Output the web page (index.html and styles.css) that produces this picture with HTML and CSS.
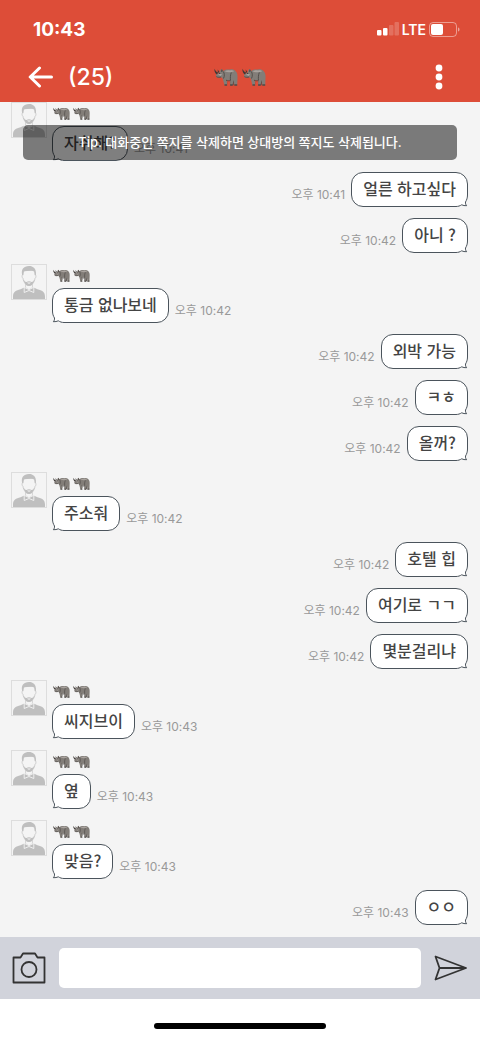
FILE: index.html
```html
<!DOCTYPE html>
<html lang="ko">
<head>
<meta charset="utf-8">
<meta name="viewport" content="width=device-width, initial-scale=1">
<title>쪽지</title>
<link rel="stylesheet" href="styles.css">
</head>
<body>
<svg class="sprite" aria-hidden="true">
  <symbol id="rhino" viewBox="0 0 24 18">
    <path fill="#4f4a47" d="M16 9h4.500l-1 8.200h-3zM9 9h3.500l.8 6.500h-2.600z"/>
    <path fill="#827d78" d="M5.500 4.400 6.800 1.600 8 1l1 1.900C12 .9 14 1.400 16 1.600c2-.6 4 0 5.300 1.200 2 1.800 2.500 4.500 2.200 7.700l-.3 7H20.400l-.8-5.500-1.200 5.500h-2.300l.2-5.600c-1.300.5-2.400.4-3.400.1l.2 5.500h-2.600L9 11.600C8.600 10.300 8 9.600 7.100 9.300 5 9.800 3.200 9.600 2.200 8.700c-.6-.9-.2-2 .6-2.800z"/>
    <path fill="#a9a39e" d="M10.500 3.200c2-1.200 4-1 5.500-.8 1.800-.5 3.200-.2 4.200.8-2.800 1.500-6.700 1.600-9.700 0zM4 6.500l2.500-1 1.500 1-1.500 1.500z"/>
    <path fill="#3f3a37" d="M2.900 6.500C1 5.300.1 3.300.5.800c.8 1.800 2 3.200 3.600 4zM3.900 4.800 3.700 1.400l1.800 2.800zM7 3.800l.9-2.700.9 2.200z"/>
    <path fill="none" stroke="#4d4845" stroke-width=".9" d="M9.300 3.500c1.300 2 1.300 4.500.2 7M17.300 4.500c-1 2.400-1 5.200-.9 7.600M12 12.200c2 .9 3.500.6 4.500.2M2.400 8.600c1.600 1 3.200.7 4.700.4"/>
    <circle cx="5.800" cy="5.500" r=".6" fill="#1f1c1a"/>
    <path fill="#35312f" d="M10.500 16.500h2.600v1h-2.600zM16.100 16.500h2.500v1h-2.500zM20.300 16.500h2.900v1h-2.900z"/>
  </symbol>
  <symbol id="person" viewBox="0 0 34 34">
    <path fill="#bfbfbf" d="M1 34v-2.500C1 27 4 25.300 8.500 24.300l5-2.300 3.500 3 3.500-3 5 2.300C30 25.300 33 27 33 31.500V34z"/>
    <path fill="#f4f4f4" stroke="#c9c9c9" stroke-width=".7" d="M13.500 18h7v4.500L17 25l-3.500-2.500z"/>
    <path fill="#f4f4f4" stroke="#c4c4c4" stroke-width=".8" d="M10.700 8c0-4 12.600-4 12.600 0v2c1 0 .8 3-.3 3.200-.4 4-3 7.300-6 7.300s-5.600-3.300-6-7.300c-1.100-.2-1.300-3.200-.3-3.200z"/>
    <path fill="#bfbfbf" d="M10.200 10C8.800 4.500 11.500 1 17 1c4 0 7.700 2.500 6.800 9l-1 .3-.6-4c-3.200-1-7-.3-10.300 0l-.6 4zM11.500 14c.9 2.300 2 3.300 3 3 1.200-1 3.800-1 5 0 1 .3 2.100-.7 3-3-.6 4.200-2.700 7-5.500 7s-4.900-2.800-5.500-7z"/>
    <path fill="#f4f4f4" d="M15.200 17.600h3.600c-.3 1.500-3.300 1.500-3.600 0z"/>
    <path fill="#bfbfbf" stroke="#f4f4f4" stroke-width=".9" d="M12.200 22.300 17 24.600l4.800-2.300v5.200L17 25.500l-4.800 2z"/>
  </symbol>
  <symbol id="tail" viewBox="0 0 12 12">
    <path fill="#f4f4f4" d="M0 0v12h12V0z"/>
    <path fill="#fff" d="M.5 0c0 3 .8 5 2 7 .2 1.600-.3 2.800-1.200 3.700 1.900.1 3.600-.2 5-.9 1.800 1.100 3.500 1.700 5.700 1.700V0z"/>
    <path fill="none" stroke="#4b545c" d="M.5 0c0 3 .8 5 2 7 .2 1.600-.3 2.800-1.200 3.700 1.900.1 3.600-.2 5-.9 1.800 1.100 3.500 1.700 5.700 1.700"/>
  </symbol>
</svg>

<header class="top">
  <div class="status">
    <time class="clock">10:43</time>
    <div class="signals">
      <svg class="bars" viewBox="0 0 22 14" aria-hidden="true" fill="#fff">
        <rect x="0" y="8" width="4.500" height="5.500" rx="1"/>
        <rect x="6" y="6" width="4.500" height="7.500" rx="1"/>
        <rect x="12" y="3" width="4.500" height="10.500" rx="1" opacity=".2"/>
        <rect x="17.500" y="0" width="4.500" height="13.500" rx="1" opacity=".2"/>
      </svg>
      <span class="network">LTE</span>
      <svg class="battery" viewBox="0 0 31 15" aria-hidden="true">
        <rect x=".5" y=".5" width="27" height="14" rx="3.500" fill="none" stroke="#fff" opacity=".45"/>
        <rect x="2" y="2" width="12" height="11" rx="2" fill="#fff"/>
        <path d="M29 5.500c2 .6 2 3.400 0 4z" fill="#fff" opacity=".5"/>
      </svg>
    </div>
  </div>
  <div class="bar">
    <div class="bar-start">
      <button class="icon-button" type="button" aria-label="뒤로">
        <svg class="back-icon" viewBox="0 0 26 22" fill="none" stroke="#fff" stroke-width="3" stroke-linecap="round" stroke-linejoin="round"><path d="M23.500 11H2.500M11.500 2 2.200 11l9.300 9"/></svg>
      </button>
      <span class="count">(25)</span>
    </div>
    <h1 class="title" aria-label="코뿔소 코뿔소">
      <svg class="rhino-large"><use href="#rhino"/></svg>
      <svg class="rhino-large"><use href="#rhino"/></svg>
    </h1>
    <button class="icon-button menu" type="button" aria-label="메뉴">
      <svg class="menu-icon" viewBox="0 0 8 26" fill="#fff"><circle cx="4" cy="4" r="3.400"/><circle cx="4" cy="13" r="3.400"/><circle cx="4" cy="22" r="3.400"/></svg>
    </button>
  </div>
</header>

<main class="chat">
  <ol class="messages">
    <li class="message received">
      <svg class="avatar"><use href="#person"/></svg>
      <div class="content">
        <div class="name"><svg class="rhino"><use href="#rhino"/></svg><svg class="rhino"><use href="#rhino"/></svg></div>
        <div class="line"><p class="bubble">자취해?<svg class="tail"><use href="#tail"/></svg></p><time class="time">오후 10:41</time></div>
      </div>
    </li>
    <li class="message sent"><div class="line"><p class="bubble">얼른 하고싶다<svg class="tail"><use href="#tail"/></svg></p><time class="time">오후 10:41</time></div></li>
    <li class="message sent"><div class="line"><p class="bubble">아니 ?<svg class="tail"><use href="#tail"/></svg></p><time class="time">오후 10:42</time></div></li>
    <li class="message received">
      <svg class="avatar"><use href="#person"/></svg>
      <div class="content">
        <div class="name"><svg class="rhino"><use href="#rhino"/></svg><svg class="rhino"><use href="#rhino"/></svg></div>
        <div class="line"><p class="bubble">통금 없나보네<svg class="tail"><use href="#tail"/></svg></p><time class="time">오후 10:42</time></div>
      </div>
    </li>
    <li class="message sent"><div class="line"><p class="bubble">외박 가능<svg class="tail"><use href="#tail"/></svg></p><time class="time">오후 10:42</time></div></li>
    <li class="message sent"><div class="line"><p class="bubble">ㅋㅎ<svg class="tail"><use href="#tail"/></svg></p><time class="time">오후 10:42</time></div></li>
    <li class="message sent"><div class="line"><p class="bubble">올꺼?<svg class="tail"><use href="#tail"/></svg></p><time class="time">오후 10:42</time></div></li>
    <li class="message received">
      <svg class="avatar"><use href="#person"/></svg>
      <div class="content">
        <div class="name"><svg class="rhino"><use href="#rhino"/></svg><svg class="rhino"><use href="#rhino"/></svg></div>
        <div class="line"><p class="bubble">주소줘<svg class="tail"><use href="#tail"/></svg></p><time class="time">오후 10:42</time></div>
      </div>
    </li>
    <li class="message sent"><div class="line"><p class="bubble">호텔 힙<svg class="tail"><use href="#tail"/></svg></p><time class="time">오후 10:42</time></div></li>
    <li class="message sent"><div class="line"><p class="bubble">여기로 ㄱㄱ<svg class="tail"><use href="#tail"/></svg></p><time class="time">오후 10:42</time></div></li>
    <li class="message sent"><div class="line"><p class="bubble">몇분걸리냐<svg class="tail"><use href="#tail"/></svg></p><time class="time">오후 10:42</time></div></li>
    <li class="message received">
      <svg class="avatar"><use href="#person"/></svg>
      <div class="content">
        <div class="name"><svg class="rhino"><use href="#rhino"/></svg><svg class="rhino"><use href="#rhino"/></svg></div>
        <div class="line"><p class="bubble">씨지브이<svg class="tail"><use href="#tail"/></svg></p><time class="time">오후 10:43</time></div>
      </div>
    </li>
    <li class="message received">
      <svg class="avatar"><use href="#person"/></svg>
      <div class="content">
        <div class="name"><svg class="rhino"><use href="#rhino"/></svg><svg class="rhino"><use href="#rhino"/></svg></div>
        <div class="line"><p class="bubble">옆<svg class="tail"><use href="#tail"/></svg></p><time class="time">오후 10:43</time></div>
      </div>
    </li>
    <li class="message received">
      <svg class="avatar"><use href="#person"/></svg>
      <div class="content">
        <div class="name"><svg class="rhino"><use href="#rhino"/></svg><svg class="rhino"><use href="#rhino"/></svg></div>
        <div class="line"><p class="bubble">맞음?<svg class="tail"><use href="#tail"/></svg></p><time class="time">오후 10:43</time></div>
      </div>
    </li>
    <li class="message sent"><div class="line"><p class="bubble">ㅇㅇ<svg class="tail"><use href="#tail"/></svg></p><time class="time">오후 10:43</time></div></li>
  </ol>
  <p class="tip" role="status">Tip. 대화중인 쪽지를 삭제하면 상대방의 쪽지도 삭제됩니다.</p>
</main>

<form class="composer">
  <button class="icon-button" type="button" aria-label="사진 첨부">
    <svg class="camera-icon" viewBox="0 0 34 32" fill="none" stroke="#333" stroke-width="1.800" stroke-linejoin="round"><path d="M1.500 5.500h7L11 1.500h12l2.500 4h7v25h-31z"/><circle cx="17" cy="17.500" r="7.500"/></svg>
  </button>
  <input class="field" type="text" aria-label="메시지">
  <button class="icon-button" type="submit" aria-label="보내기">
    <svg class="send-icon" viewBox="0 0 34 26" fill="none" stroke="#333" stroke-width="1.800" stroke-linejoin="round"><path d="M1.500 1.500 32 13 1.500 24.500l4-11.500zM5.500 13H32"/><path fill="#333" stroke="none" d="m27 11 6 2-6 2z"/></svg>
  </button>
</form>
<footer class="home"><span class="home-indicator"></span></footer>
</body>
</html>
```

FILE: styles.css
```css
* {
  box-sizing: border-box;
}

body {
  display: flex;
  flex-direction: column;
  min-height: 100vh;
  margin: 0;
  background: #fff;
  color: #444;
  font-family: "Noto Sans CJK KR", sans-serif;
}

svg {
  display: block;
  flex: none;
}

.sprite {
  position: absolute;
  width: 0;
  height: 0;
}

.icon-button {
  flex: none;
  padding: 0;
  border: 0;
  background: none;
  cursor: pointer;
}

/* Header */
.top {
  height: 102px;
  background: #dd4d38;
  color: #fff;
  font-family: Inter, "Noto Sans CJK KR", sans-serif;
}

.status {
  display: flex;
  align-items: center;
  justify-content: space-between;
  height: 58px;
  padding: 0 20px 0 33px;
}

.clock {
  font-size: 19px;
  font-weight: 700;
}

.signals {
  display: flex;
  align-items: center;
  gap: 3px;
}

.bars {
  width: 22px;
  height: 14px;
}

.network {
  font-size: 14px;
  font-weight: 600;
}

.battery {
  width: 31px;
  height: 15px;
}

.bar {
  display: grid;
  grid-template-columns: 1fr auto 1fr;
  align-items: center;
  height: 38px;
  padding: 0 37px 0 28px;
}

.bar-start {
  display: flex;
  align-items: center;
  gap: 14px;
}

.back-icon {
  width: 26px;
  height: 22px;
}

.count {
  font-size: 23px;
  font-weight: 500;
}

.title {
  display: flex;
  gap: 4px;
  margin: 0 0 0 8px;
}

.rhino-large {
  width: 24px;
  height: 18px;
}

.menu {
  justify-self: end;
}

.menu-icon {
  width: 8px;
  height: 26px;
}

/* Conversation */
.chat {
  position: relative;
  flex: 1;
  background: #f4f4f4;
}

.messages {
  display: flex;
  flex-direction: column;
  gap: 11px;
  margin: 0;
  padding: 0 12px 12px 11px;
  list-style: none;
}

.message {
  display: flex;
  align-items: flex-start;
  gap: 5px;
}

.avatar {
  width: 36px;
  height: 36px;
  border: 1px solid #ddd;
}

.name {
  display: flex;
  gap: 3px;
  height: 24px;
  padding: 5px 1px;
}

.rhino {
  width: 17px;
  height: 13px;
}

.line {
  display: flex;
  align-items: flex-end;
  gap: 6px;
}

.sent {
  justify-content: flex-end;
}

.sent .line {
  flex-direction: row-reverse;
}

.bubble {
  position: relative;
  margin: 0;
  padding: 3px 11px 6px;
  border: 1px solid #4b545c;
  border-radius: 12px;
  background: #fff;
  font-size: 16px;
  font-weight: 500;
  line-height: 24px;
}

.tail {
  position: absolute;
  bottom: -1px;
  left: -1px;
  width: 12px;
  height: 12px;
}

.sent .tail {
  right: -1px;
  left: auto;
  transform: scaleX(-1);
}

.time {
  padding-bottom: 3px;
  color: #999;
  font-family: Inter, "Noto Sans CJK KR", sans-serif;
  font-size: 12px;
  line-height: 18px;
}

.tip {
  position: absolute;
  top: 23px;
  right: 23px;
  left: 23px;
  margin: 0;
  padding: 7px;
  border-radius: 5px;
  background: rgba(0, 0, 0, 0.5);
  color: #fff;
  font-family: Inter, "Noto Sans CJK KR", sans-serif;
  font-size: 13px;
  font-weight: 500;
  line-height: 21px;
  text-align: center;
}

/* Message entry */
.composer {
  display: flex;
  align-items: center;
  gap: 13px;
  padding: 11px 12px;
  background: #d1d3db;
}

.camera-icon {
  width: 34px;
  height: 32px;
}

.send-icon {
  width: 34px;
  height: 26px;
}

.field {
  flex: 1;
  min-width: 0;
  height: 40px;
  padding: 0 10px;
  border: 0;
  border-radius: 5px;
  background: #fff;
  font: inherit;
  font-size: 16px;
}

.home {
  display: flex;
  justify-content: center;
  height: 40px;
  padding-top: 24px;
}

.home-indicator {
  width: 172px;
  height: 6px;
  border-radius: 3px;
  background: #000;
}
```
